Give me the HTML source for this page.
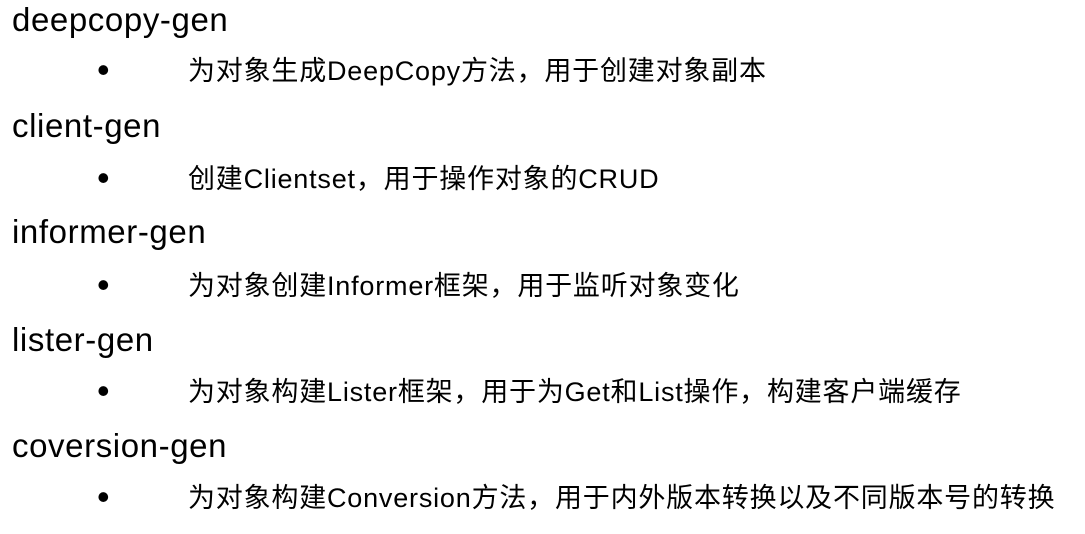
<!DOCTYPE html>
<html><head><meta charset="utf-8"><style>
body{margin:0;width:1085px;height:534px;background:#fff;position:relative;overflow:hidden;font-family:"Liberation Sans","Noto Sans CJK SC",sans-serif;color:#000}
.h{position:absolute;left:12px;font-size:33px;line-height:40px;letter-spacing:0.6px;white-space:nowrap}
.b{position:absolute;left:188px;font-size:27px;line-height:34px;letter-spacing:0.8px;white-space:nowrap}
.d{position:absolute;left:97px;font-size:36px;line-height:34px}
</style></head><body>
<div class="h" style="top:0px">deepcopy-gen</div>
<div class="d" style="top:53px">•</div><div class="b" style="top:54px">为对象生成DeepCopy方法，用于创建对象副本</div>
<div class="h" style="top:106px">client-gen</div>
<div class="d" style="top:161px">•</div><div class="b" style="top:162px">创建Clientset，用于操作对象的CRUD</div>
<div class="h" style="top:212px">informer-gen</div>
<div class="d" style="top:268px">•</div><div class="b" style="top:269px">为对象创建Informer框架，用于监听对象变化</div>
<div class="h" style="top:320px">lister-gen</div>
<div class="d" style="top:374px">•</div><div class="b" style="top:375px">为对象构建Lister框架，用于为Get和List操作，构建客户端缓存</div>
<div class="h" style="top:426px">coversion-gen</div>
<div class="d" style="top:480px">•</div><div class="b" style="top:481px">为对象构建Conversion方法，用于内外版本转换以及不同版本号的转换</div>
</body></html>
